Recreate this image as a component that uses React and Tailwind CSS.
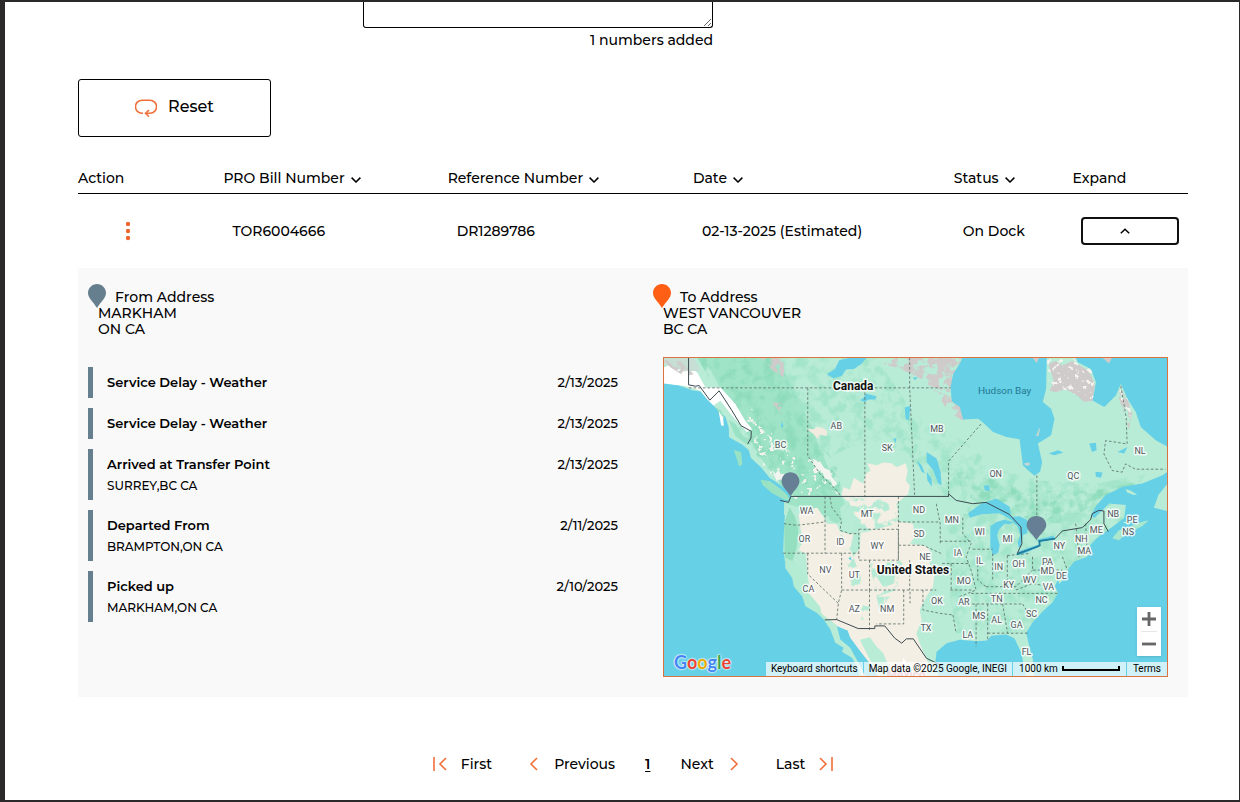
import React, { useState } from 'react';

const COLUMNS = [
  { label: 'Action', width: 'w-[13.1%]', sortable: false },
  { label: 'PRO Bill Number', width: 'w-[20.2%]', sortable: true },
  { label: 'Reference Number', width: 'w-[22.1%]', sortable: true },
  { label: 'Date', width: 'w-[23.5%]', sortable: true },
  { label: 'Status', width: 'w-[10.7%]', sortable: true },
  { label: 'Expand', width: 'w-[10.4%]', sortable: false },
];

const EVENTS = [
  { title: 'Service Delay - Weather', date: '2/13/2025' },
  { title: 'Service Delay - Weather', date: '2/13/2025' },
  { title: 'Arrived at Transfer Point', place: 'SURREY,BC CA', date: '2/13/2025' },
  { title: 'Departed From', place: 'BRAMPTON,ON CA', date: '2/11/2025' },
  { title: 'Picked up', place: 'MARKHAM,ON CA', date: '2/10/2025' },
];

const REGIONS = [
  ['BC', 117, 88], ['AB', 173, 69], ['SK', 224, 91], ['MB', 274, 72], ['ON', 333, 117],
  ['QC', 411, 119], ['NL', 478, 94], ['WA', 143, 154], ['MT', 204, 157], ['ND', 256, 153],
  ['MN', 289, 163], ['OR', 141, 182], ['ID', 177, 185], ['WY', 214, 189], ['SD', 256, 177],
  ['WI', 317, 175], ['MI', 345, 182], ['NE', 262, 200], ['IA', 295, 196], ['NV', 162, 213],
  ['UT', 191, 218], ['CA', 145, 232], ['AZ', 191, 252], ['NM', 224, 252], ['IL', 317, 204],
  ['IN', 336, 210], ['OH', 356, 207], ['PA', 385, 205], ['MD', 385, 214], ['DE', 399, 219],
  ['WV', 367, 223], ['VA', 386, 230], ['KY', 346, 228], ['MO', 301, 224], ['TN', 334, 242],
  ['NC', 379, 243], ['OK', 274, 244], ['AR', 301, 245], ['MS', 316, 259], ['AL', 334, 263],
  ['GA', 354, 268], ['SC', 369, 257], ['TX', 263, 271], ['LA', 305, 278], ['FL', 364, 296],
  ['NY', 397, 189], ['NH', 419, 182], ['MA', 422, 194], ['ME', 434, 173], ['NB', 451, 157],
  ['PE', 470, 163], ['NS', 466, 175],
];

const PIN_PATH = 'M9 0C4 0 0 4 0 9c0 5 5 8.500 9 15 4-6.500 9-10 9-15 0-5-4-9-9-9z';

function Pin({ className }) {
  return (
    <svg viewBox="0 0 18 24" className={`w-[18px] h-6 shrink-0 fill-current ${className}`} aria-hidden="true">
      <path d={PIN_PATH} />
    </svg>
  );
}

function Chevron({ up }) {
  return (
    <svg viewBox="0 0 10 6" className="w-[10px] h-[6px]" fill="none" stroke="currentColor" strokeWidth="1.5" aria-hidden="true">
      <path d={up ? 'M.8 5.200 5 1.200 9.200 5.200' : 'M.6.600 5 5 9.400.600'} />
    </svg>
  );
}

function PageIcon({ d, wide }) {
  return (
    <svg
      viewBox={wide ? '0 0 14 14' : '0 0 9 14'}
      className={`h-[14px] text-[#f0703a] ${wide ? 'w-[14px]' : 'w-[9px]'}`}
      fill="none"
      stroke="currentColor"
      strokeWidth="1.6"
      aria-hidden="true"
    >
      <path d={d} />
    </svg>
  );
}

// Blotchy patches of one colour, cut to the shape they are applied to
function Blotches({ id, seed, freq, color, gain, offset }) {
  return (
    <filter id={id} x="0" y="0" width="1" height="1" colorInterpolationFilters="sRGB">
      <feTurbulence type="fractalNoise" baseFrequency={freq} numOctaves="5" seed={seed} />
      <feColorMatrix values={`0 0 0 0 0  0 0 0 0 0  0 0 0 0 0  ${gain} 0 0 0 ${offset}`} result="mask" />
      <feFlood floodColor={color} />
      <feComposite in2="mask" operator="in" />
      <feComposite in2="SourceGraphic" operator="in" />
    </filter>
  );
}

function Terrain() {
  return (
    <g transform="scale(.33333)">
      <rect width="1515" height="960" fill="#b9ecd7" />

      {/* Forests and mountains */}
      <path
        d="M120 0 340 0 390 90 440 200 490 320 545 440 500 480 370 440 350 380 290 300 250 230 190 130z"
        fill="#a0e4c8"
      />
      <path d="M100 0H340L420 160 520 330 540 420H370L240 240z" filter="url(#forest)" />
      <path d="M330 0H640L760 180V300L640 250 560 270 500 300 440 250z" filter="url(#light)" />
      <path d="M741 160 900 250 1000 330 1130 370 1300 380 1450 350 1420 400 1300 470 1200 540 1000 520 860 430 741 300z" filter="url(#light)" />
      <path d="M880 340 1000 370 1130 400 1300 400 1440 370 1300 440 1200 500 1000 470 900 410z" filter="url(#forest)" />
      <path d="M850 470H1400L1240 640 1110 830 880 830 850 650z" filter="url(#light)" />

      {/* Dry plains and desert */}
      <path
        d="M535 415 540 390 560 398 572 362 600 380 608 350 622 340 612 318 640 324 660 316 685 318 700 330 728 318 734 340 728 370 740 385 736 410 700 440 706 470 700 492 750 500 756 540 740 560 790 568 800 580 800 620 815 650 810 690 790 720 770 760 776 790 760 830 770 860 796 920 790 960 600 960 570 880 525 810 480 775 430 730 440 700 432 650 428 590 405 580 420 550 412 520 405 470 430 458 462 452 480 480 490 500 520 500 530 525 560 530 590 520 592 490 570 470 560 440z"
        fill="#f4efe4"
      />
      <path
        d="M535 420 700 420 700 500 590 530 570 600 600 680 560 700 540 680 550 560 520 520 540 470zM620 620 720 610 700 700 640 720zM560 740 620 750 600 790 560 780zM640 720 690 720 690 770 650 760z"
        filter="url(#scrub)"
      />
      <path d="M572 525 592 530 590 575 570 600 562 570zM640 660 665 640 700 645 690 680 660 690z" fill="#b5ebd4" />
      <path d="M430 214 450 216 462 208 480 212 492 222 490 236 470 232 462 244 450 230z" fill="#f1ebdf" />
      <path d="M362 500 378 450 395 480 405 520 400 570 385 620 364 620z" fill="#93dfbf" />
      <path d="M480 430 500 420 530 450 535 490 520 500 500 490 490 460z" fill="#a0e4c8" />
      <path d="M362 600 400 620 430 660 420 690 470 750 480 800 390 720z" fill="#b3ebd3" />
      <path d="M590 850 620 842 640 870 660 890 690 960 650 960 615 900z" fill="#b9ecd7" />
      <path d="M720 905 728 915 730 950 715 960zM740 920 750 935 742 960z" fill="#fff" />

      {/* Bare rock and snow */}
      <g filter="url(#rock)">
        <path d="M290 0H360L362 60 330 40z" />
        <path d="M325 135 365 140 355 170z" />
        <path d="M660 20 700 0H910L870 70 860 105 800 85 760 55 700 30z" />
        <path d="M810 95 870 120 905 150 900 190 860 165z" />
        <path d="M1370 76 1395 120 1410 170 1400 215 1385 170 1370 120z" />
      </g>
      <path d="M1158 20 1180 10 1200 24 1230 10 1280 40 1298 80 1292 130 1265 134 1245 115 1210 95 1180 104 1162 100 1174 70z" fill="#cecbca" />
      <path d="M1150 0H1300V130L1150 90zM1370 80 1410 130 1400 220 1375 150z" filter="url(#snow)" />
      <path d="M0 30 40 10 100 45 125 90 170 90 215 140 245 190 265 215 250 225 205 175 170 130 140 150 110 100 60 85 0 80z" fill="#fff" />
      <path d="M0 0H90L110 40 60 40 0 20z" fill="#c6ded4" />
      <path d="M0 8 50 12 90 50 60 55 20 30z" filter="url(#rock)" />
      <path d="M240 180 260 150 420 330 540 420 460 380 420 340 440 300 500 330 530 380 400 430 300 330z" filter="url(#snow)" />
      <path d="M325 335 335 350 345 338 352 352 362 350 360 372 350 366 340 372 332 356zM440 305 458 318 470 312 482 332 500 340 506 360 522 380 512 388 498 366 484 364 476 342 458 336z" fill="#f2f4f0" />

      {/* West coast */}
      <g fill="#66d0e6">
        <path d="M0 78 45 84 85 98 110 102 130 125 150 146 165 160 185 178 195 210 196 240 235 262 255 278 262 302 292 330 318 362 345 380 372 400 383 418 378 434 362 432 361 490H0z" />
        <path d="M0 474H364L361 530 359 584 363 604 366 634 386 664 391 689 416 719 426 749 461 769 481 789 501 819 516 859 541 874 536 886 566 904 586 940 590 960H0z" />
        <path d="M521 809 553 822 561 844 591 884 616 916 646 960H606L586 920 561 874 531 849z" />
      </g>
      <g fill="#9ae2c4">
        <path d="M290 368 320 372 350 395 372 414 382 430 362 428 325 408 298 384z" />
        <path d="M210 278 232 284 236 322 226 328 218 300zM195 188 215 200 240 240 262 262 250 262 215 236zM158 150 172 160 182 182 172 184z" />
      </g>
      <path d="M165 162 178 180 180 206 172 204z" fill="#fff" />

      {/* Hudson Bay and the northern straits */}
      <g fill="#66d0e6" transform="translate(741 -6)">
        <path d="M160 0 152 20 130 55 122 95 126 138 150 155 160 192 205 190 218 200 250 230 290 245 330 252 340 330 355 345 375 362 392 350 398 320 385 265 425 240 435 190 425 160 400 140 410 100 412 0z" />
        <path d="M497 0 505 20 545 40 560 80 550 135 585 155 620 120 635 85 655 130 680 170 695 215 740 255 776 275V0z" />
        <path d="M776 350 760 360 700 385 640 395 590 420 562 450 545 480 555 490 600 445 650 450 645 490 776 500V460L735 458 748 420 776 385z" />
        <path d="M50 290 80 310 92 350 95 390 85 385 70 345 50 320zM20 315 35 330 45 355 35 350zM50 350 65 370 66 395 52 375z" />
        <path d="M175 475 215 445 260 430 300 455 306 495 270 475 215 478 180 488z" />
        <path d="M540 265 560 262 562 285 548 290zM418 295 445 285 462 292 435 300zM625 290 655 275 645 295zM222 392 238 390 240 408 226 406zM558 350 580 352 575 368 560 365z" />
      </g>
      <path d="M1124 228 1130 212 1132 216 1128 236 1120 236zM1085 318 1102 316 1100 326 1088 324z" fill="#c9d8d2" />
      <path d="M1320 0H1350L1340 18z" fill="#cecbca" />
      <path d="M1110 0H1130L1122 16z" fill="#cecbca" />

      {/* Atlantic, gulf and great lakes */}
      <g fill="#66d0e6" transform="translate(741 474)">
        <path d="M776 0H700L650 5 610 35 575 60 560 72 542 92 548 112 530 127 495 140 478 160 470 185 450 208 445 195 436 215 446 235 430 262 400 290 368 325 350 355 358 390 370 435 376 500H352L335 415 315 372 290 360 245 364 232 378 200 380 150 376 110 386 80 412 76 445 90 500H776z" />
        <path d="M182-4 215-20 250-36 275-32 298-14 290 0 258-18 215-14 188 0z" />
        <path d="M242 34 262 20 285 14 312 22 300 28 285 26 268 44 262 62 270 90 266 112 250 122 242 98z" />
        <path d="M300 6 330 4 352 14 356 36 352 56 340 60 336 86 328 100 324 82 332 62 324 34 312 24z" />
        <path d="M318 120 330 108 390 88 386 98 335 120zM380 75 432 62 436 72 395 82z" />
      </g>
      <path d="M1350 544 1370 520 1400 510 1440 494 1460 490 1440 508 1395 530 1370 550zM1380 496 1420 490 1395 502z" fill="#a9e8cd" />
      <path d="M1476 452 1490 420 1515 400V462z" fill="#b9ecd7" />
      <path d="M1390 396 1405 400 1425 412 1415 414 1395 406z" fill="#b9ecd7" />

      {/* Northern lakes */}
      <g fill="#66d0e6">
        <path d="M490 50 515 34 528 8 560 0H610L596 18 572 34 548 36 535 55 510 62z" />
        <path d="M590 128 602 120 608 108 640 116 636 126 616 126 604 134zM725 150 742 145 738 190 728 185zM750 60 765 58 755 68zM555 605 562 600 566 612zM355 190 360 210 352 208zM690 245 700 242 698 258z" />
      </g>

      {/* State and province borders */}
      <g fill="none" stroke="#5f746c" strokeWidth="2.600" strokeDasharray="8 6">
        <path d="M75 91H863M433 91V295L470 350 520 400 533 418M605 91V418M740 0V91L755 418" />
        <path d="M955 200 857 312V418M1123 355V480M1376 85 1392 180 1395 260 1330 250 1325 290 1350 340 1380 345 1390 320 1420 336H1510" />
        <path d="M361 500 400 505 485 495M485 418V590M359 589H587M433 589V652L525 740M535 589V700L525 740 520 790" />
        <path d="M500 420 505 450 535 490 530 520 560 530H587M587 517H706V610H587zM619 610V700M535 700H820M619 700V820M722 700V802H640" />
        <path d="M706 418V610M706 495H827M706 565H780L835 590M740 610V700M780 700V760L830 770 870 775" />
        <path d="M820 440 832 500V560M832 553H925M838 620H920M865 620V700M862 700H930M870 775 880 830M890 720 940 700 925 640 910 600 925 560 900 530V480" />
        <path d="M930 577H990M945 595V670L970 690M990 590V670M1034 596V690M1110 600V640H1200M1034 596 1100 590M925 710H1190M970 690 1060 690 1110 640M900 742H1080M940 742V870M975 742V850M1020 742 1035 830M975 830H1100M1080 742 1110 790M1200 600 1215 640M1240 500 1250 600M1270 500 1275 590" />
        <path d="M741 705V740M1060 700 1110 680 1160 690" />
      </g>
      <g fill="none" stroke="#3a4a50" strokeWidth="3" strokeLinejoin="round">
        <path d="M74 0V82L95 86 106 84 138 128 166 100 205 160 232 205 263 222 262 242 252 260" />
        <path d="M350 430 375 436 382 418H857V410L880 430 930 440 970 436 1040 472 1075 510 1078 560 1064 590 1130 568 1132 552 1178 545 1200 522 1260 512 1285 488 1290 470 1310 460 1325 462V500L1338 524" />
        <path d="M484 790 520 789 585 816H635V808H665L695 845 716 860 730 847H751L790 905 840 930" />
      </g>
      <path d="M1064 592 1132 566 1130 552 1178 545" fill="none" stroke="#1f7fa0" strokeWidth="5" />
    </g>
  );
}

function RouteMap() {
  return (
    <div className="relative h-80 overflow-hidden border border-[#d9743f] bg-[#66d0e6] font-['Roboto',sans-serif] font-normal">
      <svg viewBox="0 0 505 320" preserveAspectRatio="xMidYMid slice" className="block size-full" role="img" aria-label="Route map">
        <defs>
          <Blotches id="forest" seed="4" freq=".03" color="#8edcbb" gain="4" offset="-1.8" />
          <Blotches id="light" seed="9" freq=".03" color="#a3e5ca" gain="4" offset="-1.7" />
          <Blotches id="scrub" seed="12" freq=".03" color="#b5ebd4" gain="9" offset="-4.4" />
          <Blotches id="snow" seed="7" freq=".06" color="#f5f3ee" gain="12" offset="-7.2" />
          <Blotches id="rock" seed="3" freq=".04" color="#cecbca" gain="9" offset="-3.6" />
        </defs>
        <Terrain />
        <g fontSize="9" fill="#50575c" stroke="#fff" strokeWidth="3" strokeOpacity=".8" paintOrder="stroke" textAnchor="middle" strokeLinejoin="round">
          {REGIONS.map(([name, x, y]) => (
            <text key={name} x={x} y={y + 3}>{name}</text>
          ))}
        </g>
        <text x="342" y="37" fontSize="10" fill="#23798f" textAnchor="middle">Hudson Bay</text>
        <g fontSize="12" fontWeight="700" fill="#111" stroke="#fff" strokeWidth="3" strokeOpacity=".8" paintOrder="stroke" textAnchor="middle">
          <text x="190" y="33">Canada</text>
          <text x="250" y="217">United States</text>
        </g>
        <text x="243" y="323" fontSize="12" fontWeight="700" fill="#c58ba0" textAnchor="middle">Mexico</text>
        <g fill="#667f95">
          <path d={PIN_PATH} transform="translate(118 115)" />
          <path d={PIN_PATH} transform="translate(364 159) scale(1.1 1)" />
        </g>
      </svg>

      <a
        href="#google"
        className="absolute left-[10px] bottom-[2px] font-['Lato',sans-serif] text-[18px] leading-6 font-bold [text-shadow:0_0_1px_#fff,0_0_2px_#fff,0_0_2px_#fff]"
      >
        <span className="text-[#4285f4]">G</span>
        <span className="text-[#ea4335]">o</span>
        <span className="text-[#e9ab05]">o</span>
        <span className="text-[#4285f4]">g</span>
        <span className="text-[#34a853]">l</span>
        <span className="text-[#ea4335]">e</span>
      </a>

      <div className="absolute right-[6px] bottom-5 w-6 bg-white shadow-sm text-[#666]">
        <button type="button" aria-label="Zoom in" className="flex h-6 w-full items-center justify-center">
          <svg viewBox="0 0 14 14" className="size-[14px]" stroke="currentColor" strokeWidth="2.800">
            <path d="M7 0v14M0 7h14" />
          </svg>
        </button>
        <div className="mx-1 h-px bg-[#e6e6e6]" />
        <button type="button" aria-label="Zoom out" className="flex h-6 w-full items-center justify-center">
          <svg viewBox="0 0 14 14" className="size-[14px]" stroke="currentColor" strokeWidth="2.800">
            <path d="M0 7h14" />
          </svg>
        </button>
      </div>

      <div className="absolute right-0 bottom-0 flex h-[14px] text-[10px] leading-[14px] text-black">
        <button type="button" className="bg-white/70 px-[5px]">Keyboard shortcuts</button>
        <span className="ml-px bg-white/70 px-[5px]">Map data ©2025 Google, INEGI</span>
        <span className="ml-px flex items-center gap-1 bg-white/70 px-[6px]">
          1000 km
          <span className="h-[5px] w-[58px] border-2 border-t-0 border-black" />
        </span>
        <a href="#terms" className="ml-px bg-white/70 px-[6px]">Terms</a>
      </div>
    </div>
  );
}

function AddressHeading({ label, lines, pinClass }) {
  return (
    <div className="leading-4">
      <div className="flex h-[21px] items-start gap-[9px]">
        <Pin className={pinClass} />
        <h3 className="self-end">{label}</h3>
      </div>
      {lines.map((line) => (
        <p key={line} className="pl-[10px]">{line}</p>
      ))}
    </div>
  );
}

function ShipmentDetails() {
  return (
    <div className="grid grid-cols-2 bg-[#f9f9f9] pt-4 pb-5">
      <div className="pl-[10px] pr-[15px]">
        <AddressHeading label="From Address" lines={['MARKHAM', 'ON CA']} pinClass="text-[#667f8f]" />
        <ul className="mt-[30px] space-y-[10px]">
          {EVENTS.map((event, index) => (
            <li key={index} className="flex justify-between border-l-[5px] border-[#667f8f] py-[5px] pl-[14px] text-[13px] leading-[21px]">
              <div>
                <p className="font-semibold">{event.title}</p>
                {event.place && <p className="-mb-px pt-px text-xs leading-5">{event.place}</p>}
              </div>
              <span>{event.date}</span>
            </li>
          ))}
        </ul>
      </div>
      <div className="px-5">
        <AddressHeading label="To Address" lines={['WEST VANCOUVER', 'BC CA']} pinClass="text-[#ff5f15]" />
        <div className="mt-5 ml-[10px]">
          <RouteMap />
        </div>
      </div>
    </div>
  );
}

export default function App() {
  const [expanded, setExpanded] = useState(true);

  return (
    <div className="min-h-screen border-t-2 border-r border-b-2 border-l-[5px] border-[#2b2929] bg-white pl-[73px] pr-[51px] font-['Montserrat','Inter',sans-serif] text-sm leading-5 font-medium text-black">
      <div className="ml-[285px] w-[350px] max-w-full">
        <textarea
          aria-label="Tracking numbers"
          className="block h-[26px] w-full rounded-b-[3px] border border-t-0 border-black px-3 outline-none"
        />
        <p className="mt-[2px] text-right">1 numbers added</p>
      </div>

      <button
        type="button"
        className="mt-[29px] flex h-[58px] w-[193px] items-center justify-center gap-[11px] rounded-[3px] border border-black pb-[2px] text-base"
      >
        <svg viewBox="0 0 22 18" className="mt-[2px] h-[18px] w-[22px] text-[#f0703a]" fill="none" stroke="currentColor" strokeWidth="1.600" aria-hidden="true">
          <path d="M8 14.300H7A6.500 6.500 0 0 1 7 1.200h8a6.500 6.500 0 0 1 0 13.100h-4.500" />
          <path d="M14 11 10.500 14.300 14 17.500" />
        </svg>
        Reset
      </button>

      <table className="mt-[31px] w-full table-fixed border-collapse text-left">
        <thead>
          <tr className="border-b border-black">
            {COLUMNS.map((col) => (
              <th key={col.label} className={`p-0 pb-[5px] font-medium ${col.width}`}>
                {col.sortable ? (
                  <button type="button" className="flex items-center gap-[6px]">
                    {col.label}
                    <span className="pt-[3px]">
                      <Chevron />
                    </span>
                  </button>
                ) : (
                  col.label
                )}
              </th>
            ))}
          </tr>
        </thead>
        <tbody>
          <tr className="h-[74px]">
            <td className="p-0 pl-[43px]">
              <button type="button" aria-label="Actions" className="block px-1">
                <svg viewBox="0 0 6 20" className="h-5 w-[6px] fill-[#f0642f]">
                  <circle cx="3" cy="3" r="2.200" />
                  <circle cx="3" cy="10" r="2.200" />
                  <circle cx="3" cy="17" r="2.200" />
                </svg>
              </button>
            </td>
            <td className="p-0 pl-[9px]">TOR6004666</td>
            <td className="p-0 pl-[9px]">DR1289786</td>
            <td className="p-0 pl-[9px]">02-13-2025 (Estimated)</td>
            <td className="p-0 pl-[9px]">On Dock</td>
            <td className="p-0 pl-2 pr-[9px]">
              <button
                type="button"
                aria-label="Toggle details"
                aria-expanded={expanded}
                onClick={() => setExpanded(!expanded)}
                className="flex h-7 w-full items-center justify-center rounded-[4px] border-2 border-[#101010] pr-[10px]"
              >
                <Chevron up={expanded} />
              </button>
            </td>
          </tr>
          {expanded && (
            <tr>
              <td colSpan={6} className="p-0">
                <ShipmentDetails />
              </td>
            </tr>
          )}
        </tbody>
      </table>

      <nav aria-label="Pagination" className="mt-[57px] flex items-center justify-center gap-[30px] pb-6">
        <button type="button" className="flex items-center gap-[14px]">
          <PageIcon wide d="M1 0v14M13 1 7 7l6 6" />
          First
        </button>
        <button type="button" className="ml-[7px] flex items-center gap-4">
          <PageIcon d="M8 1 2 7l6 6" />
          Previous
        </button>
        <a href="#page-1" aria-current="page" className="font-semibold underline underline-offset-2">1</a>
        <button type="button" className="flex items-center gap-4">
          Next
          <PageIcon d="M1 1l6 6-6 6" />
        </button>
        <button type="button" className="ml-[7px] flex items-center gap-[14px]">
          Last
          <PageIcon wide d="M1 1l6 6-6 6M13 0v14" />
        </button>
      </nav>
    </div>
  );
}
